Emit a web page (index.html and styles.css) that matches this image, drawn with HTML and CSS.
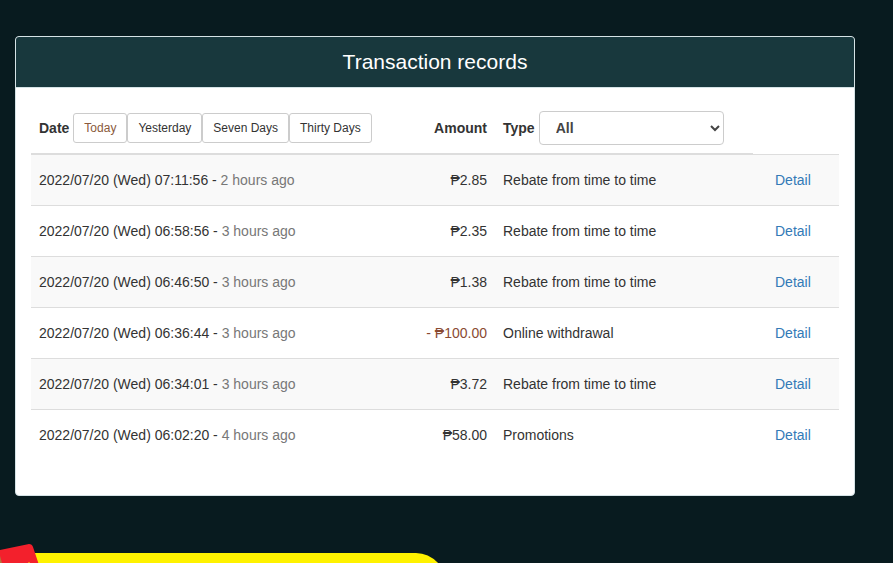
FILE: index.html
```
<!DOCTYPE html>
<html lang="en">
<head>
    <meta charset="UTF-8">
    <meta name="viewport" content="width=device-width, initial-scale=1.0">
    <title>Transaction records</title>
    <link rel="stylesheet" href="styles.css">
</head>
<body>
    <main class="panel">
        <h1 class="panel-heading">Transaction records</h1>
        <div class="panel-body">
            <table class="records">
                <thead>
                    <tr>
                        <th class="date">
                            <div class="filter">
                                <span>Date</span>
                                <div class="ranges">
                                    <button type="button" class="range active">Today</button>
                                    <button type="button" class="range">Yesterday</button>
                                    <button type="button" class="range">Seven Days</button>
                                    <button type="button" class="range">Thirty Days</button>
                                </div>
                            </div>
                        </th>
                        <th class="amount">Amount</th>
                        <th class="type">
                            <div class="filter">
                                <label for="type">Type</label>
                                <select id="type">
                                    <option>All</option>
                                    <option>Rebate from time to time</option>
                                    <option>Online withdrawal</option>
                                    <option>Promotions</option>
                                </select>
                            </div>
                        </th>
                        <td class="action"></td>
                    </tr>
                </thead>
                <tbody>
                    <tr>
                        <td>2022/07/20 (Wed) 07:11:56 - <span class="ago">2 hours ago</span></td>
                        <td class="amount">₱2.85</td>
                        <td>Rebate from time to time</td>
                        <td><a href="#" class="detail">Detail</a></td>
                    </tr>
                    <tr>
                        <td>2022/07/20 (Wed) 06:58:56 - <span class="ago">3 hours ago</span></td>
                        <td class="amount">₱2.35</td>
                        <td>Rebate from time to time</td>
                        <td><a href="#" class="detail">Detail</a></td>
                    </tr>
                    <tr>
                        <td>2022/07/20 (Wed) 06:46:50 - <span class="ago">3 hours ago</span></td>
                        <td class="amount">₱1.38</td>
                        <td>Rebate from time to time</td>
                        <td><a href="#" class="detail">Detail</a></td>
                    </tr>
                    <tr>
                        <td>2022/07/20 (Wed) 06:36:44 - <span class="ago">3 hours ago</span></td>
                        <td class="amount minus">- ₱100.00</td>
                        <td>Online withdrawal</td>
                        <td><a href="#" class="detail">Detail</a></td>
                    </tr>
                    <tr>
                        <td>2022/07/20 (Wed) 06:34:01 - <span class="ago">3 hours ago</span></td>
                        <td class="amount">₱3.72</td>
                        <td>Rebate from time to time</td>
                        <td><a href="#" class="detail">Detail</a></td>
                    </tr>
                    <tr>
                        <td>2022/07/20 (Wed) 06:02:20 - <span class="ago">4 hours ago</span></td>
                        <td class="amount">₱58.00</td>
                        <td>Promotions</td>
                        <td><a href="#" class="detail">Detail</a></td>
                    </tr>
                </tbody>
            </table>
        </div>
    </main>
    <footer class="banner">
        <svg class="banner-art" width="460" height="19" viewBox="0 0 460 19" aria-hidden="true">
            <path d="M0 9H416Q429 9 439 20V40H0Z" fill="#fff200"/>
            <path d="M0 6L29 0Q32 0 33 3L40 24L0 40Z" fill="#f3202c"/>
            <path d="M0 12L2 19H0Z" fill="#b5743c"/>
            <path d="M28 19L29 18L30 19Z" fill="#fff200"/>
        </svg>
    </footer>
</body>
</html>
```
FILE: styles.css
```
* { box-sizing: border-box; }
body { margin: 0; padding: 36px 38px 0 15px; background-color: #081b1f; color: #333; font-family: "Liberation Sans", Arial, sans-serif; font-size: 14px; line-height: 20px; }

.panel { background-color: #fff; border: 1px solid #d5e3e6; border-radius: 4px; overflow: hidden; }
.panel-heading { margin: 0; padding: 10px 15px; background-color: #18383d; border-bottom: 1px solid #d5e3e6; color: #fff; font-size: 21px; font-weight: normal; line-height: 30px; text-align: center; }
.panel-body { padding: 15px; }

.records { width: 100%; margin-bottom: 20px; border-collapse: collapse; table-layout: fixed; }
.records th, .records td { padding: 8px; text-align: left; vertical-align: middle; white-space: nowrap; }
.records th { border-bottom: 2px solid #ddd; }
.records tbody td { border-top: 1px solid #ddd; }
.records tbody tr:nth-child(odd) { background-color: #f9f9f9; }
.records .amount { width: 80px; text-align: right; }
.records .type { width: 258px; }
.records .action { width: 86px; }
.records .minus { color: #8a4a32; }
.ago { color: #777; }

.filter { display: flex; align-items: center; gap: 4px; }
.ranges { display: flex; }
.range { padding: 5px 10px; background-color: #fff; border: 1px solid #ccc; border-radius: 3px; color: #333; font-family: inherit; font-size: 12px; line-height: 18px; cursor: pointer; }
.range.active { color: #8a5a3c; }
select { width: 185px; height: 34px; padding: 6px 12px; background-color: #fff; border: 1px solid #ccc; border-radius: 4px; color: #444; font-family: inherit; font-size: 14px; font-weight: bold; }

.detail { display: inline-block; padding: 7px 14px; color: #337ab7; text-decoration: none; vertical-align: middle; }
.detail:hover { text-decoration: underline; }

.banner { margin: 48px 0 0 -15px; }
.banner-art { display: block; }
```
